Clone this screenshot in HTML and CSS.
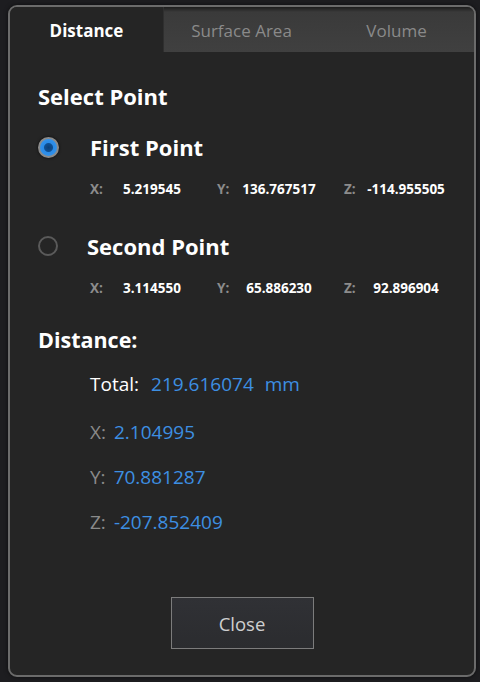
FILE: index.html
```html
<!DOCTYPE html>
<html lang="en">
<head>
    <meta charset="UTF-8">
    <title>Measure - Distance</title>
    <link rel="stylesheet" href="styles.css">
</head>
<body>
    <div class="panel">
        <!-- tabs -->
        <div class="tabs">
            <div class="tab active">Distance</div>
            <div class="tab next">Surface Area</div>
            <div class="tab">Volume</div>
        </div>

        <div class="content">
            <div class="section-title">Select Point</div>

            <div class="point-row">
                <div class="radio checked"></div>
                <div class="point-name">First Point</div>
            </div>
            <div class="coords">
                <div class="coord"><span class="axis">X:</span><span class="val">5.219545</span></div>
                <div class="coord"><span class="axis">Y:</span><span class="val">136.767517</span></div>
                <div class="coord"><span class="axis">Z:</span><span class="val">-114.955505</span></div>
            </div>

            <div class="point-row second">
                <div class="radio"></div>
                <div class="point-name">Second Point</div>
            </div>
            <div class="coords">
                <div class="coord"><span class="axis">X:</span><span class="val">3.114550</span></div>
                <div class="coord"><span class="axis">Y:</span><span class="val">65.886230</span></div>
                <div class="coord"><span class="axis">Z:</span><span class="val">92.896904</span></div>
            </div>

            <div class="section-title dist-title">Distance:</div>

            <div class="result total"><span class="res-label">Total:</span><span class="res-val">219.616074</span><span class="res-val unit">mm</span></div>
            <div class="result first"><span class="res-label dim">X:</span><span class="res-val">2.104995</span></div>
            <div class="result"><span class="res-label dim">Y:</span><span class="res-val">70.881287</span></div>
            <div class="result"><span class="res-label dim">Z:</span><span class="res-val">-207.852409</span></div>

            <div class="footer">
                <button class="close-btn">Close</button>
            </div>
        </div>
    </div>
</body>
</html>
```

FILE: styles.css
```css
* {
    margin: 0;
    padding: 0;
    box-sizing: border-box;
}

body {
    font-family: "Open Sans", "Noto Sans", "DejaVu Sans", sans-serif;
    background-color: #1d1d20;
    color: #fff;
    width: 480px;
    height: 682px;
    overflow: hidden;
    padding: 5px 4px 5px 8px;
}

/* outer panel */
.panel {
    width: 468px;
    height: 672px;
    background: #252525;
    border: 2px solid #6b6b6b;
    border-radius: 9px;
    overflow: hidden;
    display: flex;
    flex-direction: column;
    box-shadow: 0 0 4px rgba(0, 0, 0, 0.6);
}

/* tabs */
.tabs {
    display: flex;
    height: 45px;
    flex-shrink: 0;
}

.tab {
    flex: 1;
    display: flex;
    justify-content: center;
    align-items: center;
    font-size: 17px;
    color: #8a8a8a;
    background: linear-gradient(#1c1c1c 0, #3a3a3a 5px, #404040 100%);
    padding-top: 2px;
}

.tab.next {
    border-left: 1px solid #2f2f2f;
}

.tab.active {
    background: #252525;
    color: #fff;
    font-weight: 700;
    flex: 0 0 153px;
}

/* body */
.content {
    flex: 1;
    display: flex;
    flex-direction: column;
    padding-left: 28px;
}

.section-title {
    font-size: 22px;
    font-weight: 700;
    line-height: 28px;
    margin-top: 30px;
}

.point-row {
    display: flex;
    align-items: center;
    height: 28px;
    margin-top: 23px;
}

.point-row.second {
    margin-top: 34px;
}

.radio {
    width: 21px;
    height: 21px;
    border-radius: 50%;
    border: 2px solid #5a5a5a;
    margin-right: 31px;
    flex-shrink: 0;
}

.radio.checked {
    border: 2px solid #8a8a8a;
    background: radial-gradient(circle, #0b3f78 0, #0f4f92 4px, #2a8ae6 5px, #3a9af0 100%);
    box-shadow: 0 0 3px rgba(0, 0, 0, 0.8);
}

.point-row.second .radio {
    width: 20px;
    height: 20px;
    margin-right: 29px;
}

.point-name {
    font-size: 22px;
    font-weight: 700;
}

.coords {
    display: flex;
    margin-top: 19px;
    margin-left: 52px;
    font-size: 13.5px;
    font-weight: 700;
    line-height: 18px;
}

.coord {
    width: 127px;
    display: flex;
}

.axis {
    width: 20px;
    color: #8c8c8c;
}

.val {
    width: 84px;
    text-align: center;
    white-space: nowrap;
}

.dist-title {
    margin-top: 29px;
    font-size: 21.5px;
}

.result {
    display: flex;
    margin-left: 52px;
    font-size: 19px;
    line-height: 26px;
    margin-top: 19px;
}

.result.total {
    margin-top: 17px;
}

.result.first {
    margin-top: 22px;
}

.res-label {
    color: #fff;
    margin-right: 12px;
}

.res-label.dim {
    color: #8a8a8a;
    margin-right: 8px;
}

.res-val {
    color: #3d8fe2;
}

.res-val.unit {
    margin-left: 11px;
}

.footer {
    display: flex;
    justify-content: center;
    margin-top: 62px;
    margin-left: -28px;
}

.close-btn {
    width: 143px;
    height: 52px;
    border: 1px solid #7c7c7c;
    background: linear-gradient(#303135, #2b2c2f);
    color: #cfcfcf;
    font-family: "Open Sans", "Noto Sans", sans-serif;
    font-size: 18.5px;
}
```
